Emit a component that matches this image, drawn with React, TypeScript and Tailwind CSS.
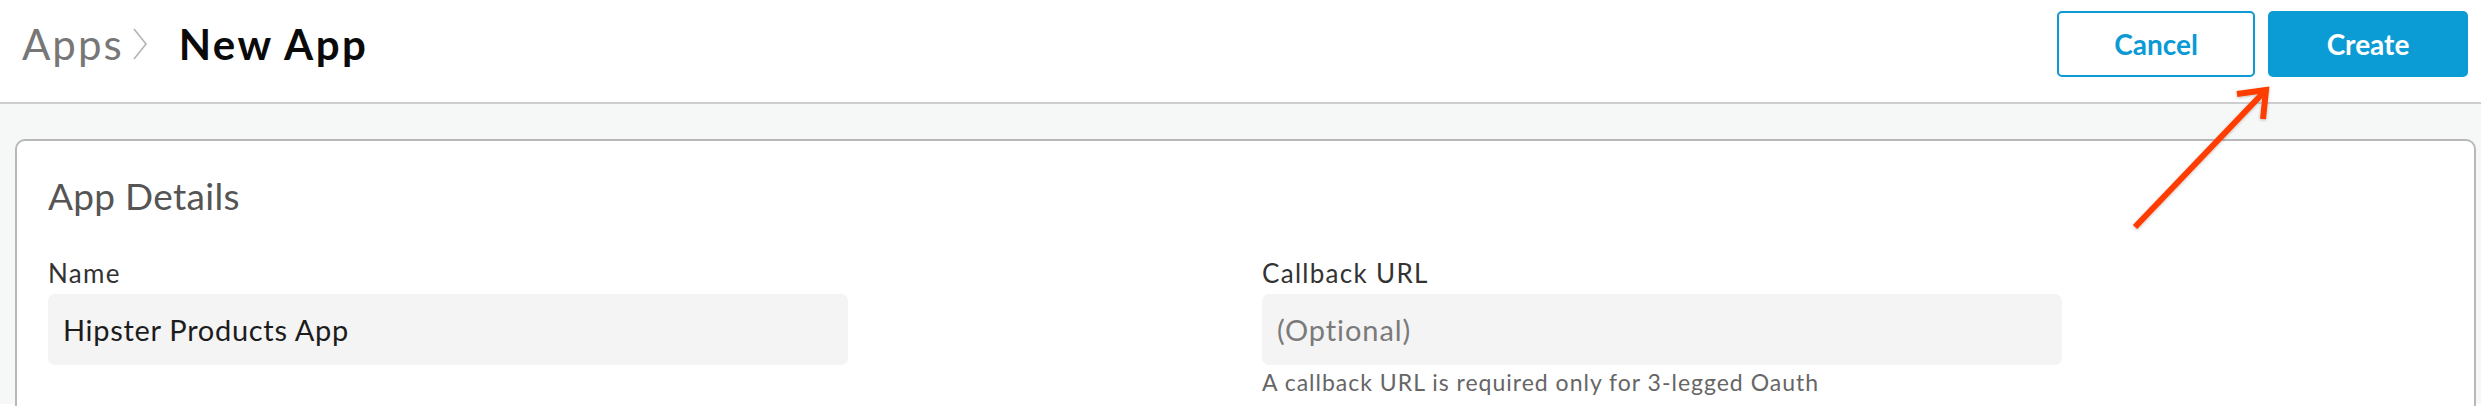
import React from 'react'

function Header() {
  return (
    <div className="h-[104px] bg-white border-b-2 border-[#cdcfcf] flex items-start justify-between pl-[22px] pr-[13px] pt-[11px]">
      <div className="h-[66px] flex items-center">
        <span className="text-[42px] leading-none tracking-[2px] text-[#777777]">Apps</span>
        <svg width="16" height="32" viewBox="0 0 16 32" className="ml-[8px] mr-[31px]">
          <path d="M2 1 L14 16 L2 31" fill="none" stroke="#b4b4b4" strokeWidth="1.6" />
        </svg>
        <span className="text-[42px] leading-none font-bold tracking-[2.5px] text-[#0a0a0a]">New App</span>
      </div>
      <div className="flex gap-[13px]">
        <button className="w-[198px] h-[66px] rounded-[5px] border-2 border-[#0b9ad4] bg-white text-[#0b9ad4] text-[28px] font-bold">
          Cancel
        </button>
        <button className="w-[200px] h-[66px] rounded-[5px] bg-[#0b9cd5] text-white text-[28px] font-bold">
          Create
        </button>
      </div>
    </div>
  )
}

function Field({ label, value, placeholder, help }: { label: string; value?: string; placeholder?: string; help?: string }) {
  return (
    <div className="flex flex-col">
      <label className="text-[26px] leading-[29px] tracking-[1.3px] text-[#333333]">{label}</label>
      <div className="mt-[6px] w-[800px] h-[71px] rounded-[7px] bg-[#f4f4f4] flex items-center px-[15px]">
        {value ? (
          <span className="text-[29px] tracking-[0.7px] text-[#1c1c1c]">{value}</span>
        ) : (
          <span className="text-[29px] tracking-[0.9px] text-[#7a7a7a]">{placeholder}</span>
        )}
      </div>
      {help && <p className="mt-[4px] text-[23px] leading-[26px] tracking-[1px] text-[#666666]">{help}</p>}
    </div>
  )
}

export default function App() {
  return (
    <div className="relative w-full h-[406px] overflow-hidden bg-white" style={{ fontFamily: 'Lato, "Open Sans", sans-serif' }}>
      <Header />

      <div className="bg-[#f6f8f8] pt-[35px] pl-[15px] pr-[5px] h-[300px]">
        <div className="bg-white border-2 border-[#b8b8b8] rounded-[10px] h-[400px] pl-[31px] pt-[33px]">
          <h2 className="text-[37px] leading-[43px] tracking-[0.3px] text-[#555555]">App Details</h2>
          <div className="mt-[42px] grid grid-cols-[1214px_1fr]">
            <Field label="Name" value="Hipster Products App" />
            <Field label="Callback URL" placeholder="(Optional)" help="A callback URL is required only for 3-legged Oauth" />
          </div>
        </div>
      </div>

      {/* annotation arrow */}
      <svg className="absolute left-0 top-0 pointer-events-none" width="2481" height="406" viewBox="0 0 2481 406">
        <defs>
          <filter id="sh" x="-20%" y="-20%" width="140%" height="140%">
            <feDropShadow dx="0" dy="1" stdDeviation="1.5" floodColor="#000" floodOpacity="0.25" />
          </filter>
        </defs>
        <g filter="url(#sh)" stroke="#ff3c00" strokeWidth="6" fill="none">
          <line x1="2135" y1="227" x2="2264" y2="92" />
          <polyline points="2237,94 2266,90 2263,119" strokeLinejoin="miter" />
        </g>
      </svg>
    </div>
  )
}
